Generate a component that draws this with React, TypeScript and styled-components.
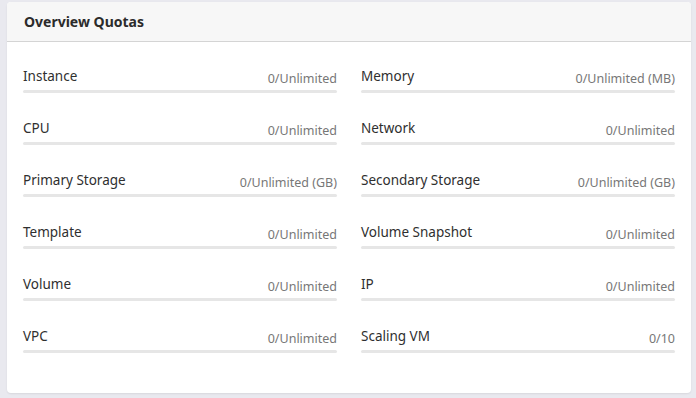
import styled, { createGlobalStyle } from 'styled-components';

const quotas = [
  { name: 'Instance', value: '0/Unlimited' },
  { name: 'Memory', value: '0/Unlimited (MB)' },
  { name: 'CPU', value: '0/Unlimited' },
  { name: 'Network', value: '0/Unlimited' },
  { name: 'Primary Storage', value: '0/Unlimited (GB)' },
  { name: 'Secondary Storage', value: '0/Unlimited (GB)' },
  { name: 'Template', value: '0/Unlimited' },
  { name: 'Volume Snapshot', value: '0/Unlimited' },
  { name: 'Volume', value: '0/Unlimited' },
  { name: 'IP', value: '0/Unlimited' },
  { name: 'VPC', value: '0/Unlimited' },
  { name: 'Scaling VM', value: '0/10' },
];

const App = () => {
  return (
    <>
      <GlobalStyle />
      <Page>
        <Card>
          <CardHeader>
            <Title>Overview Quotas</Title>
          </CardHeader>
          <QuotaGrid>
            {quotas.map((q) => (
              <QuotaItem key={q.name}>
                <QuotaTop>
                  <QuotaName>{q.name}</QuotaName>
                  <QuotaValue>{q.value}</QuotaValue>
                </QuotaTop>
                <QuotaBar />
              </QuotaItem>
            ))}
          </QuotaGrid>
        </Card>
      </Page>
    </>
  );
};

export default App;

const GlobalStyle = createGlobalStyle`
  html, body {
    margin: 0;
    padding: 0;
    background: #e9e9ef;
    font-family: "Noto Sans", "Open Sans", sans-serif;
  }
`;

const Page = styled.div`
  width: 696px;
  height: 398px;
  padding: 2px 5px 0 7px;
  box-sizing: border-box;
`;

const Card = styled.div`
  width: 684px;
  height: 391px;
  background: #ffffff;
  border-radius: 4px;
  overflow: hidden;
  box-shadow: 0 1px 2px rgba(0, 0, 0, 0.08);
`;

const CardHeader = styled.div`
  height: 40px;
  box-sizing: border-box;
  padding: 0 17px;
  display: flex;
  align-items: center;
  background: #f7f7f7;
  border-bottom: 1px solid #d4d4d4;
`;

const Title = styled.h2`
  margin: 0;
  font-size: 14px;
  font-weight: 700;
  color: #2b2b2b;
`;

const QuotaGrid = styled.div`
  display: grid;
  grid-template-columns: 314px 314px;
  column-gap: 24px;
  row-gap: 25px;
  padding: 24px 16px 0 16px;
`;

const QuotaItem = styled.div`
  display: flex;
  flex-direction: column;
`;

const QuotaTop = styled.div`
  display: flex;
  justify-content: space-between;
  align-items: flex-end;
  height: 20px;
`;

const QuotaName = styled.span`
  font-size: 13.5px;
  line-height: 20px;
  color: #2f2f2f;
`;

const QuotaValue = styled.span`
  font-size: 12.5px;
  line-height: 16px;
  margin-bottom: -1px;
  color: #777777;
`;

const QuotaBar = styled.div`
  margin-top: 4px;
  height: 3px;
  border-radius: 2px;
  background: #e6e6e6;
`;
